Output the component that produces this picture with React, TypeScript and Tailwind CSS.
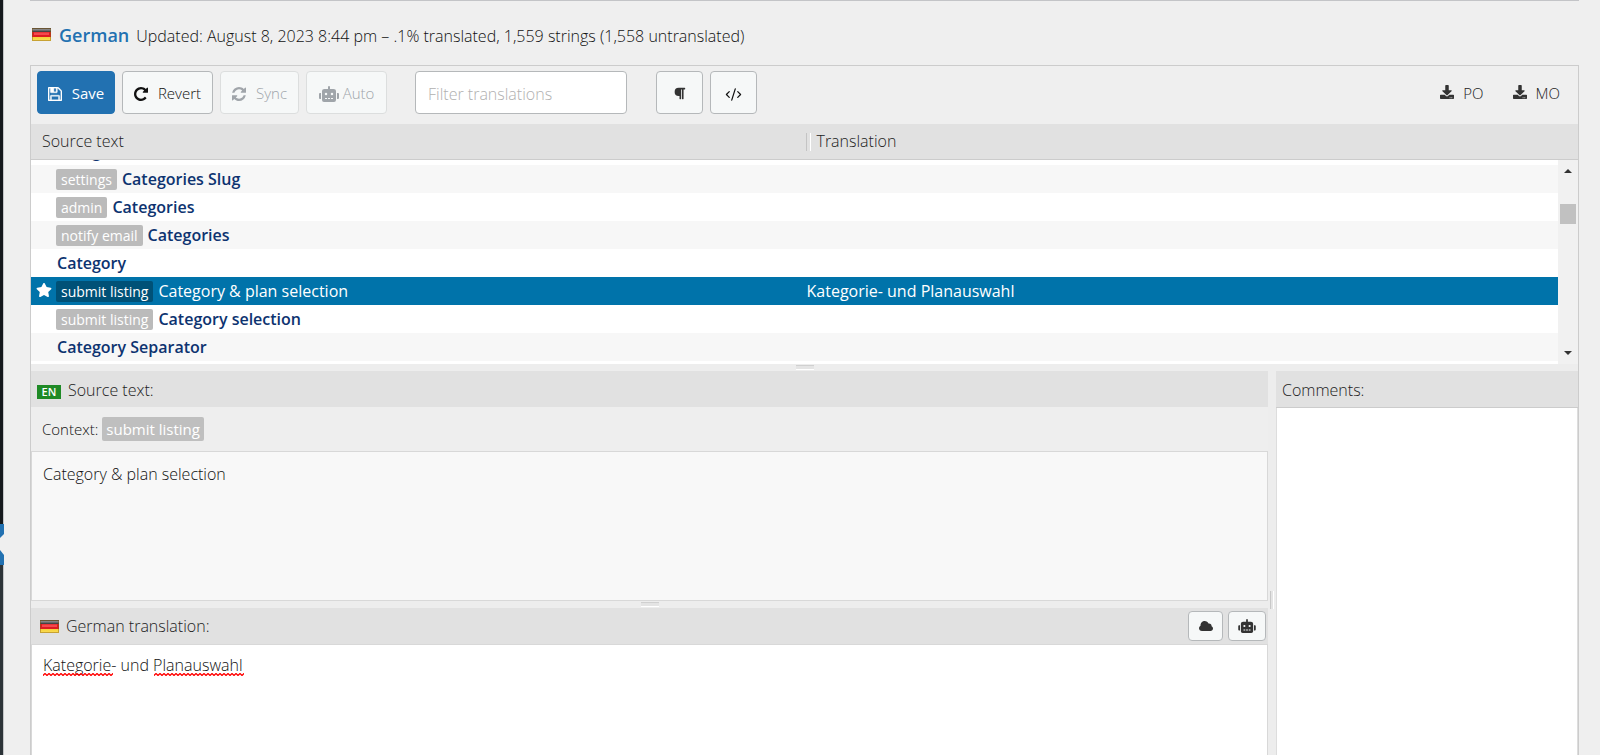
import { useState } from 'react';
import { CodeXml } from 'lucide-react';
import { FaDownload, FaParagraph, FaRobot, FaStar } from 'react-icons/fa';

const rows = [
  { id: 1, context: '', source: 'Categories', target: '' },
  { id: 2, context: 'settings', source: 'Categories Slug', target: '' },
  { id: 3, context: 'admin', source: 'Categories', target: '' },
  { id: 4, context: 'notify email', source: 'Categories', target: '' },
  { id: 5, context: '', source: 'Category', target: '' },
  { id: 6, context: 'submit listing', source: 'Category & plan selection', target: 'Kategorie- und Planauswahl' },
  { id: 7, context: 'submit listing', source: 'Category selection', target: '' },
  { id: 8, context: '', source: 'Category Separator', target: '' },
];

const toolButton =
  'flex h-[43px] items-center justify-center rounded border border-[#b5b8ba] bg-[#f6f8f8] pt-0.5 text-[15px] text-[#111] disabled:border-[#dcdede] disabled:text-[#a0a5aa]';

function SaveIcon() {
  return (
    <svg viewBox="0 128 1536 1536" className="size-3.5" fill="currentColor" stroke="currentColor" strokeWidth="40" aria-hidden="true">
      <path d="M384 1536h768v-384h-768v384zm896 0h128v-896q0-14-10-38.5t-20-34.5l-281-281q-10-10-34-20t-39-10v416q0 40-28 68t-68 28h-576q-40 0-68-28t-28-68v-416h-128v1280h128v-416q0-40 28-68t68-28h832q40 0 68 28t28 68v416zm-384-928v-320q0-13-9.5-22.5t-22.5-9.5h-192q-13 0-22.5 9.5t-9.5 22.5v320q0 13 9.5 22.5t22.5 9.5h192q13 0 22.5-9.5t9.5-22.5zm640 32v928q0 40-28 68t-68 28h-1344q-40 0-68-28t-28-68v-1344q0-40 28-68t68-28h928q40 0 88 20t76 48l280 280q28 28 48 76t20 88z" />
    </svg>
  );
}

function RevertIcon() {
  return (
    <svg viewBox="0 128 1536 1536" className="size-3.5" fill="currentColor" aria-hidden="true">
      <path d="M1536 256v448q0 26-19 45t-45 19h-448q-42 0-59-40-17-39 14-69l138-138q-148-137-349-137-104 0-198.500 40.500t-163.500 109.500-109.500 163.500-40.500 198.500 40.500 198.500 109.500 163.500 163.500 109.500 198.500 40.500q119 0 225-52t179-147q7-10 23-12 15 0 25 9l137 138q9 8 9.500 20.500t-7.500 22.500q-109 132-264 204.500t-327 72.500q-156 0-298-61t-245-164-164-245-61-298 61-298 164-245 245-164 298-61q147 0 284.500 55.500t244.500 156.500l130-129q29-31 70-14 39 17 39 59z" />
    </svg>
  );
}

function SyncIcon() {
  return (
    <svg viewBox="0 128 1536 1536" className="size-3.5" fill="currentColor" aria-hidden="true">
      <path d="M1511 1056q0 5-1 7-64 268-268 434.500t-478 166.500q-146 0-282.500-55t-243.500-157l-129 129q-19 19-45 19t-45-19-19-45v-448q0-26 19-45t45-19h448q26 0 45 19t19 45-19 45l-137 137q71 66 161 102t187 36q134 0 250-65t186-179q11-17 53-117 8-23 30-23h192q13 0 22.500 9.500t9.500 22.500zm25-800v448q0 26-19 45t-45 19h-448q-26 0-45-19t-19-45 19-45l138-138q-148-137-349-137-134 0-250 65t-186 179q-11 17-53 117-8 23-30 23h-199q-13 0-22.500-9.500t-9.500-22.500v-7q65-268 270-434.500t480-166.500q146 0 284 55.500t245 156.500l130-129q19-19 45-19t45 19 19 45z" />
    </svg>
  );
}

function CloudIcon() {
  return (
    <svg viewBox="0 0 14 10" className="h-[10px] w-3.5" fill="currentColor" aria-hidden="true">
      <path d="M3 10C1.200 10 0 8.800 0 7.200C0 6 .7 5.100 1.500 4.700C1.400 2.200 3.100 0 5.600 0C7.600 0 8.900 1.200 9.500 2.600C11.500 2.400 12.600 3.700 12.600 5.200C13.500 5.600 14 6.500 14 7.500C14 9 12.900 10 11.500 10Z" />
    </svg>
  );
}

function Flag() {
  return (
    <svg viewBox="0 0 19 13" className="h-[13px] w-[19px] shrink-0" role="img" aria-label="German flag">
      <defs>
        <linearGradient id="flag-black" x1="0" y1="0" x2="0" y2="1">
          <stop offset="0" stopColor="#3a3a3a" />
          <stop offset=".4" stopColor="#8a8a8a" />
          <stop offset="1" stopColor="#333" />
        </linearGradient>
        <linearGradient id="flag-gold" x1="0" y1="0" x2="0" y2="1">
          <stop offset="0" stopColor="#f5cf3a" />
          <stop offset="1" stopColor="#fbdf55" />
        </linearGradient>
      </defs>
      <rect width="19" height="4" fill="url(#flag-black)" />
      <rect y="4" width="19" height="5" fill="#dd1c22" />
      <rect x="2" y="4.500" width="15" height="2.500" fill="#f5494c" />
      <rect y="9" width="19" height="4" fill="url(#flag-gold)" />
      <rect x=".5" y=".5" width="18" height="12" fill="none" stroke="#8a5a10" strokeOpacity=".45" />
    </svg>
  );
}

function Squiggle({ className }: { className: string }) {
  return (
    <svg className={`h-[3px] ${className}`}>
      <defs>
        <pattern id="squiggle" width="4" height="3" patternUnits="userSpaceOnUse">
          <path d="M-1 1L0 2.500L2 .5L4 2.500L5 1" fill="none" stroke="#f00" strokeWidth="1.3" />
        </pattern>
      </defs>
      <rect width="100%" height="3" fill="url(#squiggle)" />
    </svg>
  );
}

/* Grip between two panes */
function Splitter() {
  return (
    <div className="flex h-[7px] shrink-0 items-center justify-center bg-[#ededed]">
      <div className="h-[5px] w-[18px] border-y border-[#d0d0d0] border-b-white bg-[#e4e4e4]" />
    </div>
  );
}

export default function App() {
  const [selected, setSelected] = useState(6);
  const [filter, setFilter] = useState('');
  const [translation, setTranslation] = useState('Kategorie- und Planauswahl');
  const [comments, setComments] = useState('');

  return (
    <div className="flex h-screen overflow-hidden bg-[#efefef] font-['Open_Sans',sans-serif] text-base font-light text-[#111]">
      {/* Edge of the admin menu */}
      <div className="flex w-1 shrink-0 flex-col">
        <div className="h-[524px] border-r border-[#c3c5c7] bg-[#15191c]" />
        <svg viewBox="0 0 4 41" className="h-[41px] w-1">
          <rect width="4" height="41" fill="#2271b1" />
          <path d="M4 10L0 14V26L4 31Z" fill="#efefef" />
        </svg>
        <div className="flex-1 border-r border-[#c3c5c7] bg-[#2c3338]" />
      </div>

      <main className="flex min-w-0 flex-1 flex-col pr-[21px] pl-[26px]">
        <div className="h-px shrink-0 bg-[#c3c4c7]" />

        <header className="flex h-16 shrink-0 items-center gap-2 pt-1 pb-px pl-0.5">
          <Flag />
          <h1 className="flex items-baseline gap-[7px]">
            <a href="#german" className="text-lg font-semibold text-[#2271b1]">German</a>
            <span>Updated: August 8, 2023 8:44 pm – .1% translated, 1,559 strings (1,558 untranslated)</span>
          </h1>
        </header>

        <div className="flex min-h-0 flex-1 flex-col border border-b-0 border-[#ccc]">
          {/* Toolbar */}
          <div className="flex h-[58px] shrink-0 items-start gap-[7px] px-[6px] pt-[5px]">
            <button type="button" className="flex h-[43px] w-[78px] items-center justify-center gap-2.5 rounded border border-[#2271b1] bg-[#2271b1] pt-0.5 text-[15px] font-normal text-white">
              <SaveIcon />
              Save
            </button>
            <button type="button" className={`w-[91px] gap-2.5 ${toolButton}`}>
              <RevertIcon />
              Revert
            </button>
            <button type="button" disabled className={`w-[79px] gap-2.5 ${toolButton}`}>
              <SyncIcon />
              Sync
            </button>
            <button type="button" disabled className={`w-[81px] gap-1 ${toolButton}`}>
              <FaRobot className="h-4 w-5" />
              Auto
            </button>
            <input
              type="text"
              aria-label="Filter translations"
              placeholder="Filter translations"
              value={filter}
              onChange={e => setFilter(e.target.value)}
              className="ml-[21px] h-[43px] w-[212px] rounded border border-[#b5b8ba] bg-white px-3 pt-0.5 placeholder:text-[#b0b0b0]"
            />
            <button type="button" aria-label="Toggle invisibles" className={`ml-[22px] w-[47px] ${toolButton}`}>
              <FaParagraph className="size-[13px] text-[#333]" />
            </button>
            <button type="button" aria-label="Toggle code view" className={`w-[47px] ${toolButton}`}>
              <CodeXml className="mt-0.5 size-[17px]" strokeWidth={1.75} />
            </button>
            <div className="ml-auto flex h-[43px] items-center gap-[29px] pt-0.5 pr-3 text-[15px]">
              {['PO', 'MO'].map(type => (
                <a key={type} href={`#${type}`} className="flex items-center gap-[9px] text-[#222]">
                  <FaDownload className="mb-1 size-3.5 text-[#333]" />
                  {type}
                </a>
              ))}
            </div>
          </div>

          {/* Column headings */}
          <div className="flex h-9 shrink-0 border-b border-[#ccc] bg-[#e1e1e1] text-[#222]">
            <div id="col-source" className="w-[calc(50%+1px)] pt-[5px] pl-[11px]">Source text</div>
            <div className="mt-[9px] mr-[6px] h-[18px] w-[5px] border-x border-[#c4c4c4] border-r-white" />
            <div id="col-target" className="pt-[5px]">Translation</div>
          </div>

          {/* String list */}
          <div className="flex h-[204px] shrink-0 overflow-hidden bg-white">
            <div className="min-w-0 flex-1">
              <table aria-labelledby="col-source col-target" className="-mt-[23px] w-full table-fixed">
                <tbody>
                  {rows.map(row => {
                    const active = row.id === selected;
                    return (
                      <tr
                        key={row.id}
                        onClick={() => setSelected(row.id)}
                        className={active ? 'bg-[#0073aa] font-normal text-white' : 'font-semibold text-[#0d3370] even:bg-[#f7f7f7]'}
                      >
                        <td className="h-7 p-0">
                          <div className="flex h-7 items-center">
                            <span className="flex w-[25px] justify-center">{active && <FaStar className="mb-0.5 size-4" />}</span>
                            {row.context && (
                              <span
                                className={`mr-[5px] rounded-xs px-[5px] text-sm leading-[21px] font-normal ${
                                  active ? 'bg-[#005177]' : 'bg-[#bbb] text-white'
                                }`}
                              >
                                {row.context}
                              </span>
                            )}
                            <span className={row.context ? '' : 'pl-px'}>{row.source}</span>
                          </div>
                        </td>
                        <td className="p-0 pl-3">{row.target}</td>
                      </tr>
                    );
                  })}
                </tbody>
              </table>
            </div>
            {/* Scrollbar */}
            <div className="flex w-5 shrink-0 flex-col items-center bg-[#f1f1f1] py-[9px]">
              <div className="size-0 border-x-4 border-b-4 border-x-transparent border-b-[#333]" />
              <div className="mt-[31px] h-5 w-4 bg-[#c1c1c1]" />
              <div className="mt-auto size-0 border-x-4 border-t-4 border-x-transparent border-t-[#333]" />
            </div>
          </div>

          <Splitter />

          <div className="flex min-h-0 flex-1">
            <section className="flex min-w-0 flex-1 flex-col">
              <div className="flex h-9 shrink-0 items-center gap-[7px] bg-[#e1e1e1] pt-0.5 pl-[6px] text-[#222]">
                <span className="mt-1 h-3.5 w-6 bg-[#1f8a26] text-center text-[11px] leading-[14px] font-semibold text-white">EN</span>
                <h2>Source text:</h2>
              </div>
              <div className="flex h-11 shrink-0 items-center gap-1 bg-[#eee] pl-[11px] text-[15px]">
                <span>Context:</span>
                <span className="rounded-xs bg-[#bfbfbf] px-1 leading-6 font-normal text-white">submit listing</span>
              </div>
              <div className="h-[150px] shrink-0 border border-[#d8d8d8] bg-[#f8f8f8] px-[11px] py-2.5">Category &amp; plan selection</div>
              <Splitter />
              <div className="flex h-9 shrink-0 items-center gap-[7px] bg-[#e1e1e1] pr-0.5 pl-[9px] text-[#222]">
                <Flag />
                <label htmlFor="translation" className="mr-auto">German translation:</label>
                <button type="button" aria-label="Suggestions" className="flex h-[30px] w-[35px] items-center justify-center rounded border border-[#b5b8ba] bg-[#f6f8f8] text-[#333]">
                  <CloudIcon />
                </button>
                <button type="button" aria-label="Auto translate" className="-ml-0.5 flex h-[30px] w-[38px] items-center justify-center rounded border border-[#b5b8ba] bg-[#f6f8f8] text-[#333]">
                  <FaRobot className="h-3.5 w-[18px]" />
                </button>
              </div>
              <div className="relative min-h-0 flex-1 border border-b-0 border-[#d8d8d8] bg-white">
                <textarea
                  id="translation"
                  spellCheck={false}
                  value={translation}
                  onChange={e => setTranslation(e.target.value)}
                  className="block h-full w-full resize-none px-[11px] py-2 outline-none"
                />
                {/* Spelling marks under both nouns */}
                <div className="pointer-events-none absolute top-[28px] left-[11px] flex gap-[41px]" aria-hidden="true">
                  <Squiggle className="w-[70px]" />
                  <Squiggle className="w-[90px]" />
                </div>
              </div>
            </section>

            <div className="relative w-2 shrink-0 bg-[#ededed]">
              <div className="absolute top-[220px] left-0.5 h-[18px] w-1 border-x border-[#c8c8c8] border-r-white bg-[#e4e4e4]" />
            </div>

            <section className="flex w-[302px] shrink-0 flex-col">
              <label htmlFor="comments" className="flex h-[37px] shrink-0 items-center border-b border-[#ccc] bg-[#e1e1e1] pt-0.5 pl-[6px] text-[#222]">Comments:</label>
              <textarea
                id="comments"
                value={comments}
                onChange={e => setComments(e.target.value)}
                className="min-h-0 flex-1 resize-none border-x border-[#ddd] bg-white p-2.5 outline-none"
              />
            </section>
          </div>
        </div>
      </main>
    </div>
  );
}
